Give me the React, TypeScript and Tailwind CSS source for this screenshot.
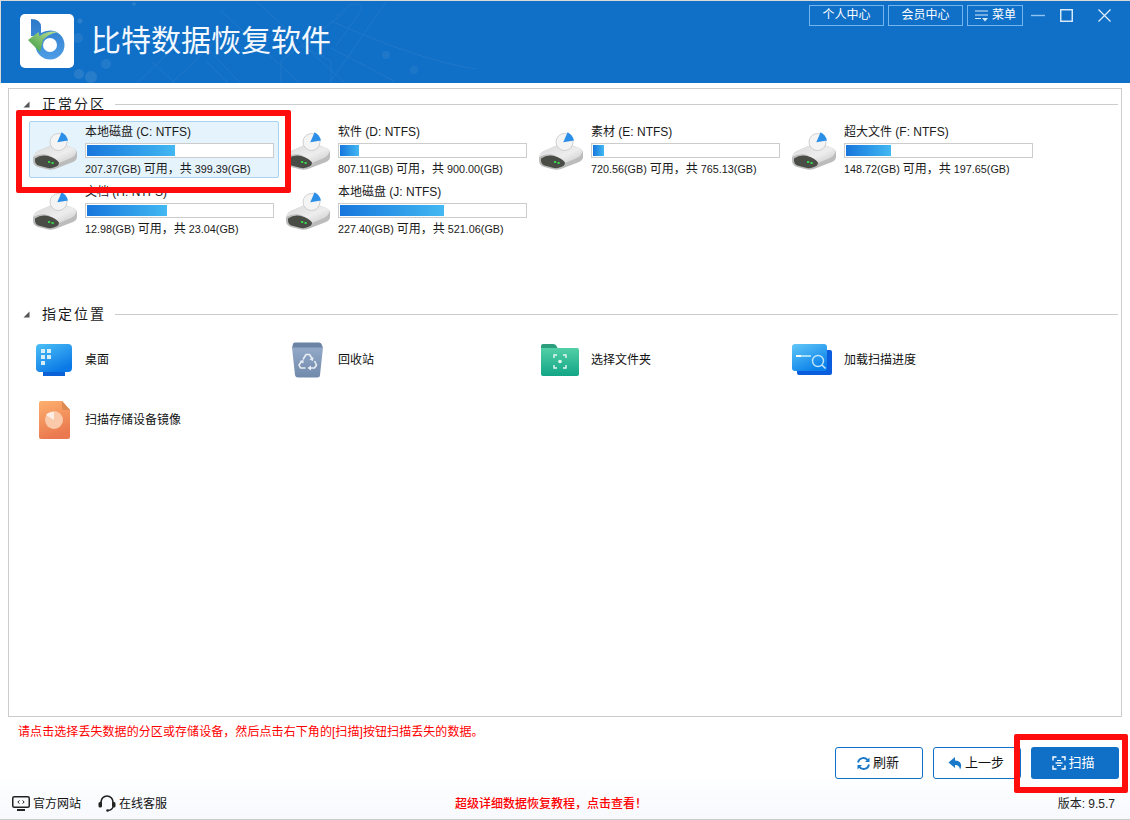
import type { ReactNode } from "react";

const drives = [
  { name: "本地磁盘 (C: NTFS)", free: "207.37(GB)", total: "399.39(GB)", fill: "w-[88px]", selected: true },
  { name: "软件 (D: NTFS)", free: "807.11(GB)", total: "900.00(GB)", fill: "w-[19px]" },
  { name: "素材 (E: NTFS)", free: "720.56(GB)", total: "765.13(GB)", fill: "w-[11px]" },
  { name: "超大文件 (F: NTFS)", free: "148.72(GB)", total: "197.65(GB)", fill: "w-[45px]" },
  { name: "文档 (H: NTFS)", free: "12.98(GB)", total: "23.04(GB)", fill: "w-[80px]" },
  { name: "本地磁盘 (J: NTFS)", free: "227.40(GB)", total: "521.06(GB)", fill: "w-[104px]" },
];

function DriveIcon() {
  return (
    <svg width="50" height="50" viewBox="0 0 50 50" className="shrink-0">
      <defs>
        <linearGradient id="driveBody" x1="0" y1="0" x2="1" y2="1">
          <stop offset="0" stopColor="#d8d8d8" />
          <stop offset="0.6" stopColor="#ededed" />
          <stop offset="1" stopColor="#c8c8c8" />
        </linearGradient>
      </defs>
      <path d="M2 33Q2 29 7 26L23 19Q27 17.5 32 19L42 23Q46 25 46 28V32Q46 35 42 37L24 44Q21 45 17 44.5L7 42Q2 40 2 36Z" fill="#bcbcbc" />
      <path d="M2 32Q2 29 7 26L23 19Q27 17.5 32 19L42 23Q46 25 45 28Q44 31 40 33L28 38Q24 33 17 30Q9 28 2 32Z" fill="url(#driveBody)" />
      <path d="M4 33.500Q10 29.500 17 31Q25 33 28 37.500Q28 41 24 42Q20 44 15 42.500L7.500 40.500Q4 39 4 35.500Z" fill="#4a4c46" />
      <rect x="17" y="36" width="2.200" height="2" fill="#39d24c" />
      <rect x="20.500" y="37" width="2.200" height="2" fill="#39d24c" />
      <circle cx="27.500" cy="17" r="8.500" fill="#f4f4f4" stroke="#c6c6c6" strokeWidth="0.800" />
      <path d="M26.300 17.200L30.600 7.200Q35.500 9.500 37 15.500Z" fill="#2b8fe8" />
    </svg>
  );
}

function DriveTile({ name, free, total, fill, selected }: { name: string; free: string; total: string; fill: string; selected?: boolean }) {
  return (
    <div
      className={`flex h-[57px] items-center rounded-[2px] border pl-[1px] ${
        selected ? "border-[#a9d3f0] bg-[#e5f3fd]" : "border-transparent"
      }`}
    >
      <DriveIcon />
      <div className="ml-[4px] w-[189px]">
        <div className="h-[17px] text-[12px] leading-[19px] text-[#1a1a1a]">{name}</div>
        <div className="mt-[3px] h-[15px] border border-[#cccccc] bg-white p-[1px]">
          <div className={`h-full bg-gradient-to-r from-[#1876dc] to-[#43b8f2] ${fill}`} />
        </div>
        <div className="mt-[3px] text-[10.8px] leading-[16px] whitespace-nowrap text-[#1a1a1a]">
          {free} <span className="text-[12px]">可用，共</span> {total}
        </div>
      </div>
    </div>
  );
}

function SectionHead({ title }: { title: string }) {
  return (
    <div className="flex h-[20px] items-center pl-[14px]">
      <svg width="7" height="7" viewBox="0 0 7 7" className="shrink-0">
        <path d="M6.500 0.500V6.500H0.500Z" fill="#555555" />
      </svg>
      <span className="ml-[12px] text-[14px] leading-[20px] tracking-[2px] text-[#1a1a1a]">{title}</span>
      <div className="ml-[9px] mr-[3px] h-px flex-1 bg-[#cccccc]" />
    </div>
  );
}

function LocationTile({ icon, label }: { icon: ReactNode; label: string }) {
  return (
    <div className="flex h-[57px] items-center">
      <div className="flex w-[56px] shrink-0 items-center">{icon}</div>
      <span className="text-[12px] text-[#111111]">{label}</span>
    </div>
  );
}

function DesktopIcon() {
  return (
    <svg width="38" height="34" viewBox="0 0 38 34" className="ml-[6px]">
      <defs>
        <linearGradient id="deskFill" x1="0" y1="0" x2="0.6" y2="1">
          <stop offset="0" stopColor="#4cc0f6" />
          <stop offset="1" stopColor="#0a78e6" />
        </linearGradient>
      </defs>
      <path d="M8 28h22v5H8z" fill="#0a62d6" />
      <rect x="1" y="1" width="36" height="28" rx="4" fill="url(#deskFill)" />
      <g fill="#d5eefc">
        <rect x="6" y="6" width="4" height="4" />
        <rect x="12" y="6" width="4" height="4" />
        <rect x="6" y="12" width="4" height="4" />
        <rect x="12" y="12" width="4" height="4" />
        <rect x="6" y="18" width="4" height="4" />
      </g>
    </svg>
  );
}

function RecycleIcon() {
  return (
    <svg width="33" height="36" viewBox="0 0 33 36" className="ml-[9px]">
      <defs>
        <linearGradient id="binFill" x1="0" y1="0" x2="0" y2="1">
          <stop offset="0" stopColor="#93a9c8" />
          <stop offset="1" stopColor="#7189ab" />
        </linearGradient>
      </defs>
      <path d="M2 2Q2 0.500 4 0.500H28Q30 0.500 30.500 2L32 6H1Z" fill="#6b83a4" />
      <path d="M1 5.500H32L29 33Q29 35.500 26 35.500H7Q4.500 35.500 4 33Z" fill="url(#binFill)" />
      <g fill="none" stroke="#e8eef5" strokeWidth="1.600" strokeLinejoin="round">
        <path d="M12 17.500L15 12.500H18.500L21 16.500" />
        <path d="M23.500 19L25.500 23L23.500 26H19.500" />
        <path d="M14.500 26H9.500L8 23L10.500 19.500" />
      </g>
      <g fill="#e8eef5">
        <path d="M22.500 15L22 19L18.500 17.500Z" />
        <path d="M20 23.500V28.500L16.500 26Z" />
        <path d="M8.500 19L12.500 18L12.500 21.500Z" />
      </g>
    </svg>
  );
}

function FolderIcon() {
  return (
    <svg width="38" height="32" viewBox="0 0 38 32" className="ml-[6px]">
      <defs>
        <linearGradient id="folderFill" x1="0" y1="0" x2="0" y2="1">
          <stop offset="0" stopColor="#52cfa6" />
          <stop offset="1" stopColor="#12a586" />
        </linearGradient>
      </defs>
      <path d="M0 2Q0 0 2 0H12Q15 0 16 3L17 5H0Z" fill="#2b9d7d" />
      <path d="M0 4H36Q38 4 38 6V30Q38 32 36 32H2Q0 32 0 30Z" fill="url(#folderFill)" />
      <path d="M13 14v-3h3M22 11h3v3M25 21v3h-3M16 24h-3v-3" fill="none" stroke="#e6f8f2" strokeWidth="1.400" />
      <circle cx="19" cy="17.500" r="1.800" fill="#e6f8f2" />
    </svg>
  );
}

function LoadIcon() {
  return (
    <svg width="40" height="31" viewBox="0 0 40 31" className="ml-[4px]">
      <defs>
        <linearGradient id="loadFill" x1="0" y1="0" x2="0.6" y2="1">
          <stop offset="0" stopColor="#62c8f7" />
          <stop offset="1" stopColor="#0a80ea" />
        </linearGradient>
      </defs>
      <rect x="5" y="6" width="35" height="25" rx="2" fill="#0a5ddc" />
      <rect x="0" y="0" width="35" height="27" rx="3" fill="url(#loadFill)" />
      <rect x="4" y="11" width="5" height="2" fill="#ffffff" />
      <rect x="9" y="11" width="10" height="2" fill="#a5dcf8" />
      <circle cx="26" cy="17" r="5.500" fill="none" stroke="#bfe6fb" strokeWidth="1.400" />
      <path d="M30 21l3.500 3.500" stroke="#bfe6fb" strokeWidth="1.600" />
    </svg>
  );
}

function PieFileIcon() {
  return (
    <svg width="32" height="38" viewBox="0 0 32 38" className="ml-[10px]">
      <defs>
        <linearGradient id="pieFill" x1="0" y1="0" x2="0.3" y2="1">
          <stop offset="0" stopColor="#fdb06e" />
          <stop offset="1" stopColor="#ea794f" />
        </linearGradient>
      </defs>
      <path d="M2 0H23L31 9V36Q31 38 29 38H2Q0 38 0 36V2Q0 0 2 0Z" fill="url(#pieFill)" />
      <path d="M23 0L31 9H25Q23 9 23 7Z" fill="#dd8a52" />
      <circle cx="15" cy="19" r="9" fill="#f9c9a9" />
      <path d="M15 19V11C11 11 8 12 7 14Z" fill="#fbeee4" />
    </svg>
  );
}

// faint bubbles and circuit lines behind the title
function HeaderPattern() {
  return (
    <svg width="1130" height="83" viewBox="0 0 1130 83" className="absolute inset-0" fill="none">
      <g fill="#ffffff">
        <circle cx="79" cy="20" r="2.500" opacity="0.12" />
        <circle cx="77" cy="37" r="5" opacity="0.07" />
        <circle cx="105" cy="63" r="5" opacity="0.08" />
        <circle cx="90" cy="76" r="6" opacity="0.1" />
        <circle cx="78" cy="73" r="5" opacity="0.1" />
        <circle cx="133" cy="3" r="2" opacity="0.1" />
        <circle cx="385" cy="54" r="4" opacity="0.06" />
        <circle cx="413" cy="69" r="4" opacity="0.05" />
      </g>
      <g stroke="#ffffff" strokeWidth="1" opacity="0.06">
        <path d="M135 83L190 30L240 83M170 83L230 25M220 10L300 83M255 0L345 83" />
        <path d="M280 83V60L300 45L330 60V83M300 45L345 10M330 20Q420 60 475 68" />
        <path d="M385 1L330 80M330 47L393 80M335 15L350 3H358Q362 5 360 10L335 45" />
        <path d="M150 60L175 83M205 60L228 83M240 50L280 30" />
      </g>
    </svg>
  );
}

function Logo() {
  return (
    <div className="flex h-[54px] w-[54px] shrink-0 items-center justify-center rounded-[5px] bg-white">
      <svg width="54" height="54" viewBox="0 0 54 54">
        <defs>
          <linearGradient id="logoB" x1="0" y1="0" x2="0" y2="1">
            <stop offset="0" stopColor="#2b78c8" />
            <stop offset="1" stopColor="#4e9de6" />
          </linearGradient>
          <linearGradient id="logoArrow" x1="1" y1="0" x2="0" y2="1">
            <stop offset="0" stopColor="#c2e09a" />
            <stop offset="1" stopColor="#369a3f" />
          </linearGradient>
        </defs>
        <path
          fillRule="evenodd"
          d="M11 5Q21 5 21 13V19Q25 16.500 30 16.500A14.500 14.500 0 1 1 15.500 31V22H11ZM30 24A7 7 0 1 0 30 38A7 7 0 1 0 30 24Z"
          fill="url(#logoB)"
        />
        <path d="M8 26L18.500 18L19.500 22Q28 16 38 18Q28 20 23 26L20 38Z" fill="url(#logoArrow)" />
      </svg>
    </div>
  );
}

export default function App() {
  return (
    <div
      className="relative flex h-[820px] w-[1130px] flex-col overflow-hidden bg-white text-[12px]"
      style={{ fontFamily: '"Liberation Sans", "Noto Sans CJK SC", sans-serif' }}
    >
      <header className="relative flex h-[83px] shrink-0 items-start border-t border-l border-[#d9d9d9] bg-[#106fc6]">
        <HeaderPattern />
        <div className="relative mt-[13px] ml-[19px] flex items-center">
          <Logo />
          <h1 className="ml-[17px] text-[30px] leading-[54px] font-normal whitespace-nowrap text-[#f2f8fd]">
            比特数据恢复软件
          </h1>
        </div>
        <div className="relative mt-[4px] ml-auto flex items-start pr-[19px]">
          <button className="h-[21px] w-[75px] border border-[#72b5ef] text-[12px] leading-[19px] text-white">个人中心</button>
          <button className="ml-[4px] h-[21px] w-[75px] border border-[#72b5ef] text-[12px] leading-[19px] text-white">会员中心</button>
          <button className="ml-[4px] flex h-[21px] w-[56px] items-center justify-center gap-[3px] border border-[#72b5ef] text-[12px] leading-[19px] text-white">
            <svg width="15" height="13" viewBox="0 0 15 13">
              <path d="M1 2H14M1 6H14M1 9.500H7" stroke="#d6e9f9" strokeWidth="1.200" />
              <path d="M8 9H14L11 12.500Z" fill="#d6e9f9" />
            </svg>
            菜单
          </button>
          <svg width="15" height="13" viewBox="0 0 15 13" className="mt-[4px] ml-[8px]">
            <path d="M0 6.500H14" stroke="#8fc4f0" strokeWidth="1.400" />
          </svg>
          <svg width="13" height="13" viewBox="0 0 13 13" className="mt-[4px] ml-[14px]">
            <rect x="0.750" y="0.750" width="11.500" height="11.500" fill="none" stroke="#e3f0fb" strokeWidth="1.400" />
          </svg>
          <svg width="13" height="13" viewBox="0 0 13 13" className="mt-[4px] ml-[25px]">
            <path d="M0.500 0.500L12.500 12.500M12.500 0.500L0.500 12.500" stroke="#e3f0fb" strokeWidth="1.200" />
          </svg>
        </div>
      </header>

      <main className="mx-[8px] mt-[5px] h-[629px] shrink-0 border border-[#cccccc] pt-[5px]">
        <SectionHead title="正常分区" />
        <div className="mt-[7px] ml-[20px] grid grid-cols-[250px_250px_250px_250px] gap-x-[3px] gap-y-[3px]">
          {drives.map((d) => (
            <DriveTile key={d.name} {...d} />
          ))}
        </div>
        <div className="mt-[66px]">
          <SectionHead title="指定位置" />
        </div>
        <div className="mt-[7px] ml-[20px] grid grid-cols-[250px_250px_250px_250px] gap-x-[3px] gap-y-[3px]">
          <LocationTile icon={<DesktopIcon />} label="桌面" />
          <LocationTile icon={<RecycleIcon />} label="回收站" />
          <LocationTile icon={<FolderIcon />} label="选择文件夹" />
          <LocationTile icon={<LoadIcon />} label="加载扫描进度" />
          <LocationTile icon={<PieFileIcon />} label="扫描存储设备镜像" />
        </div>
      </main>

      <p className="mt-[7px] h-[16px] pl-[18px] text-[12px] leading-[16px] tracking-[0.075px] text-[#ff0000]">
        请点击选择丢失数据的分区或存储设备，然后点击右下角的[扫描]按钮扫描丢失的数据。
      </p>

      <div className="mt-[7px] flex h-[32px] shrink-0 justify-end gap-[10px] pr-[11px]">
        <button className="flex w-[88px] items-center justify-center gap-[2px] rounded-[3px] border border-[#106fc6] pr-[3px] text-[13px] text-[#111111]">
          <svg width="15" height="15" viewBox="0 0 15 15" fill="none">
            <path d="M2 6.500A5.500 5.500 0 0 1 12 4.500" stroke="#1a78c8" strokeWidth="1.800" />
            <path d="M13 8.500A5.500 5.500 0 0 1 3 10.500" stroke="#1a78c8" strokeWidth="1.800" />
            <path d="M13.500 1.500V6H9Z" fill="#1a78c8" />
            <path d="M1.500 13.500V9H6Z" fill="#1a78c8" />
          </svg>
          刷新
        </button>
        <button className="flex w-[88px] items-center justify-center gap-[2px] rounded-[3px] border border-[#106fc6] pr-[2px] text-[13px] text-[#111111]">
          <svg width="15" height="14" viewBox="0 0 15 14">
            <path d="M7 1L0.500 6.500L7 12V9C9.500 9 11.500 10 12 13.500C14.500 9.500 13 4.500 7 4.500Z" fill="#1a78c8" />
          </svg>
          上一步
        </button>
        <button className="flex w-[88px] items-center justify-center gap-[2px] rounded-[3px] bg-[#106fc6] pr-[3px] text-[13px] text-white">
          <svg width="14" height="14" viewBox="0 0 14 14" fill="none">
            <path d="M1 4.500V1H4.500M9.500 1H13V4.500M13 9.500V13H9.500M4.500 13H1V9.500" stroke="#ffffff" strokeWidth="1.400" />
            <path d="M3.500 7H10.500" stroke="#ffffff" strokeWidth="1.400" />
            <path d="M5 4.500H9M5 9.500H9" stroke="#ffffff" strokeWidth="1" />
          </svg>
          扫描
        </button>
      </div>

      <footer className="mt-[1px] flex h-[40px] shrink-0 items-center border-b border-[#cccccc] bg-gradient-to-b from-[#fdfeff] to-[#f7f9fd] pt-[8px]">
        <div className="flex w-[455px] shrink-0 items-center pl-[12px]">
          <svg width="18" height="15" viewBox="0 0 18 15" fill="none">
            <rect x="0.750" y="0.750" width="16.500" height="10.500" rx="1.500" stroke="#222222" strokeWidth="1.500" />
            <path d="M5 14H13" stroke="#222222" strokeWidth="2" />
            <path d="M7.500 4.500L5.800 6L7.500 7.500M10.500 4.500L12.200 6L10.500 7.500" stroke="#222222" strokeWidth="1" />
          </svg>
          <span className="ml-[3px] text-[12px] text-[#111111]">官方网站</span>
          <svg width="18" height="17" viewBox="0 0 18 17" fill="none" className="ml-[17px]">
            <path d="M3 10V7A6 6 0 0 1 15 7V10" stroke="#222222" strokeWidth="1.700" />
            <rect x="0.500" y="7" width="3.500" height="5.500" rx="1.500" fill="#222222" />
            <rect x="14" y="7" width="3.500" height="5.500" rx="1.500" fill="#222222" />
            <path d="M15 12Q14 15 10 15.500" stroke="#222222" strokeWidth="1.400" />
            <circle cx="9.500" cy="15.500" r="1.300" fill="#222222" />
          </svg>
          <span className="ml-[3px] text-[12px] text-[#111111]">在线客服</span>
        </div>
        <span className="text-[12px] font-medium text-[#ff0000]">超级详细数据恢复教程，点击查看！</span>
        <span className="ml-auto pr-[15px] text-[12px] text-[#222222]">版本: 9.5.7</span>
      </footer>

      <div className="absolute top-[110px] left-[16px] h-[83px] w-[275px] rounded-[2px] border-[6px] border-[#ff0d0d]" />
      <div className="absolute top-[734px] left-[1014px] h-[59px] w-[114px] rounded-[2px] border-[6px] border-[#ff0d0d]" />
    </div>
  );
}
